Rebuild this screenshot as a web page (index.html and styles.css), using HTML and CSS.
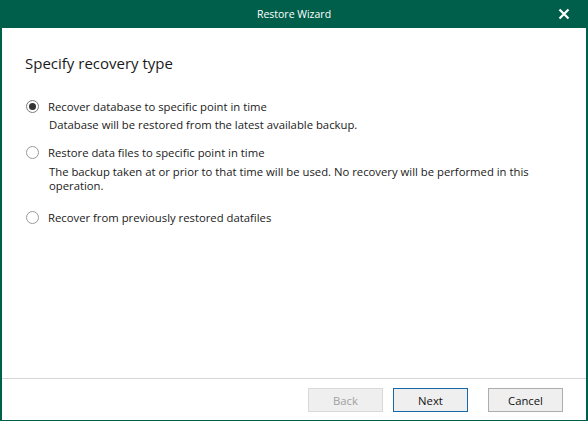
FILE: index.html
```html
<!DOCTYPE html>
<html>
<head>
<meta charset="utf-8">
<link rel="stylesheet" href="styles.css">
</head>
<body>
<div class="window">
  <div class="titlebar">
    <span class="title">Restore Wizard</span>
    <span class="close">
      <svg width="12" height="12" viewBox="0 0 12 12"><path d="M1.5 1.5 L10.5 10.5 M10.5 1.5 L1.5 10.5" stroke="#fff" stroke-width="2.2" fill="none"/></svg>
    </span>
  </div>
  <div class="content">
    <h1 class="heading">Specify recovery type</h1>
    <div class="options">
      <div class="option">
        <div class="opt-row"><span class="radio checked"></span><span class="label">Recover database to specific point in time</span></div>
        <div class="desc">Database will be restored from the latest available backup.</div>
      </div>
      <div class="option">
        <div class="opt-row"><span class="radio"></span><span class="label">Restore data files to specific point in time</span></div>
        <div class="desc">The backup taken at or prior to that time will be used. No recovery will be performed in this operation.</div>
      </div>
      <div class="option last">
        <div class="opt-row"><span class="radio"></span><span class="label">Recover from previously restored datafiles</span></div>
      </div>
    </div>
  </div>
  <div class="footer">
    <button class="btn disabled">Back</button>
    <button class="btn default">Next</button>
    <button class="btn cancel">Cancel</button>
  </div>
</div>
</body>
</html>
```
FILE: styles.css
```css
html, body {
  margin: 0;
  padding: 0;
  width: 588px;
  height: 421px;
  overflow: hidden;
  background: #fff;
}
.window {
  width: 588px;
  height: 421px;
  box-sizing: border-box;
  border-left: 2px solid #005f4b;
  border-right: 2px solid #005f4b;
  border-bottom: 1px solid #005f4b;
  display: flex;
  flex-direction: column;
  font-family: "Open Sans", "Noto Sans", sans-serif;
  color: #1a1a1a;
}
.titlebar {
  height: 28px;
  margin: 0 -2px;
  background: #005f4b;
  display: flex;
  align-items: center;
  justify-content: center;
  position: relative;
  color: #fff;
  font-size: 10.5px;
}
.close {
  position: absolute;
  right: 18px;
  top: 8px;
  width: 12px;
  height: 12px;
  display: flex;
}
.content {
  flex: 1;
  padding: 0 0 0 23px;
}
.heading {
  margin: 25px 0 0 0;
  font-size: 15px;
  font-weight: normal;
  line-height: 20px;
  color: #1a1a1a;
}
.options {
  margin-top: 24px;
  display: flex;
  flex-direction: column;
  gap: 11px;
}
.option.last {
  margin-top: 4px;
}
.opt-row {
  display: flex;
  align-items: center;
  height: 18px;
}
.radio {
  width: 11px;
  height: 11px;
  border: 1px solid #9a9a9a;
  border-radius: 50%;
  background: #fff;
  margin-left: 1px;
  margin-right: 9px;
  display: flex;
  align-items: center;
  justify-content: center;
  box-sizing: content-box;
  flex: none;
}
.radio.checked {
  border-color: #7a7a7a;
}
.radio.checked::after {
  content: "";
  width: 7px;
  height: 7px;
  border-radius: 50%;
  background: #333;
}
.label, .desc {
  font-size: 11.3px;
  line-height: 15px;
}
.desc {
  margin-left: 24px;
  margin-top: 3px;
  line-height: 14.5px;
  padding-right: 40px;
}
.footer {
  height: 42px;
  border-top: 1px solid #d6d6d6;
  display: flex;
  align-items: flex-start;
  justify-content: flex-end;
  padding: 9px 23px 0 0;
  box-sizing: border-box;
}
.btn {
  width: 75px;
  height: 24px;
  box-sizing: border-box;
  font-family: inherit;
  font-size: 11.3px;
  background: #efefef;
  border: 1px solid #adadad;
  color: #111;
  padding: 0;
}
.btn.disabled {
  color: #a0a0a0;
  border-color: #d9d9d9;
  background: #efefef;
}
.btn.default {
  margin-left: 10px;
  border-color: #1a67a8;
}
.btn.cancel {
  margin-left: 20px;
}
```
